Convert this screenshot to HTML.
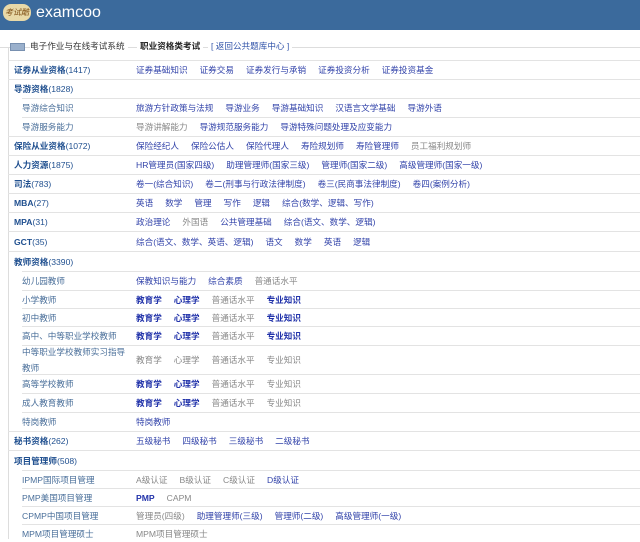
<!DOCTYPE html>
<html><head><meta charset="utf-8"><style>
*{margin:0;padding:0;box-sizing:border-box}
body{width:640px;height:539px;overflow:hidden;background:#fff;font-family:"Liberation Sans","Noto Sans CJK SC",sans-serif;font-size:8.6px;position:relative}
.hd{position:absolute;left:0;top:0;width:640px;height:30px;background:#3b6a9c}
.logo{position:absolute;left:3px;top:4px;width:28px;height:17px;border-radius:8px;background:#e8d9a8;color:#7a4a10;font-size:8px;line-height:17px;text-align:center;font-style:italic}
.brand{position:absolute;left:36px;top:4px;color:#fff;font-size:16px}
.tab{position:absolute;top:40px;color:#333}
.tl{position:absolute;left:0;top:47px;width:640px;height:1px;background:#ddd}
.frame{position:absolute;left:8px;top:48px;width:1px;height:491px;background:#ddd}
.r{position:absolute;left:8px;width:632px;border-top:1px solid #e3e3e3;display:flex;align-items:center}
.l{position:absolute;left:6px;color:#1f4f8f}
.l b{font-weight:bold}
.s{left:14px;color:#4a6f9a}
.c{position:absolute;left:128px;white-space:nowrap}
.c span{margin-right:12px;color:#3344aa}
.c .g{color:#888}
.c .b{font-weight:bold;color:#2233aa}
</style></head><body>
<div class="hd"><div class="logo">考试酷</div><div class="brand">examcoo</div></div>
<div class="tl"></div>
<div style="position:absolute;left:10px;top:43px;width:15px;height:8px;background:#9ab0cc;border:1px solid #7890b0"></div>
<div class="tab" style="left:30px;background:#fff;padding-right:3px">电子作业与在线考试系统</div>
<div class="tab" style="left:137px;font-weight:bold;color:#222;background:#fff;padding:0 3px">职业资格类考试</div>
<div class="tab" style="left:208px;color:#3355aa;background:#fff;padding:0 3px">[ 返回公共题库中心 ]</div>
<div class="frame"></div>

<div class="r" style="top:60px;height:19px"><div class="l"><b>证券从业资格</b>(1417)</div><div class="c"><span>证券基础知识</span><span>证券交易</span><span>证券发行与承销</span><span>证券投资分析</span><span>证券投资基金</span></div></div>
<div class="r" style="top:79px;height:19px"><div class="l"><b>导游资格</b>(1828)</div></div>
<div class="r" style="top:98px;height:19px;left:22px"><div class="l s" style="left:0">导游综合知识</div><div class="c" style="left:114px"><span>旅游方针政策与法规</span><span>导游业务</span><span>导游基础知识</span><span>汉语言文学基础</span><span>导游外语</span></div></div>
<div class="r" style="top:117px;height:19px;left:22px"><div class="l s" style="left:0">导游服务能力</div><div class="c" style="left:114px"><span class="g">导游讲解能力</span><span>导游规范服务能力</span><span>导游特殊问题处理及应变能力</span></div></div>
<div class="r" style="top:136px;height:19px"><div class="l"><b>保险从业资格</b>(1072)</div><div class="c"><span>保险经纪人</span><span>保险公估人</span><span>保险代理人</span><span>寿险规划师</span><span>寿险管理师</span><span class="g">员工福利规划师</span></div></div>
<div class="r" style="top:155px;height:19px"><div class="l"><b>人力资源</b>(1875)</div><div class="c"><span>HR管理员(国家四级)</span><span>助理管理师(国家三级)</span><span>管理师(国家二级)</span><span>高级管理师(国家一级)</span></div></div>
<div class="r" style="top:174px;height:19px"><div class="l"><b>司法</b>(783)</div><div class="c"><span>卷一(综合知识)</span><span>卷二(刑事与行政法律制度)</span><span>卷三(民商事法律制度)</span><span>卷四(案例分析)</span></div></div>
<div class="r" style="top:193px;height:19px"><div class="l"><b>MBA</b>(27)</div><div class="c"><span>英语</span><span>数学</span><span>管理</span><span>写作</span><span>逻辑</span><span>综合(数学、逻辑、写作)</span></div></div>
<div class="r" style="top:212px;height:19px"><div class="l"><b>MPA</b>(31)</div><div class="c"><span>政治理论</span><span class="g">外国语</span><span>公共管理基础</span><span>综合(语文、数学、逻辑)</span></div></div>
<div class="r" style="top:231px;height:20px"><div class="l"><b>GCT</b>(35)</div><div class="c"><span>综合(语文、数学、英语、逻辑)</span><span>语文</span><span>数学</span><span>英语</span><span>逻辑</span></div></div>
<div class="r" style="top:251px;height:20px"><div class="l"><b>教师资格</b>(3390)</div></div>
<div class="r" style="top:271px;height:19px;left:22px"><div class="l s" style="left:0">幼儿园教师</div><div class="c" style="left:114px"><span>保教知识与能力</span><span>综合素质</span><span class="g">普通话水平</span></div></div>
<div class="r" style="top:290px;height:18px;left:22px"><div class="l s" style="left:0">小学教师</div><div class="c" style="left:114px"><span class="b">教育学</span><span class="b">心理学</span><span class="g">普通话水平</span><span class="b">专业知识</span></div></div>
<div class="r" style="top:308px;height:18px;left:22px"><div class="l s" style="left:0">初中教师</div><div class="c" style="left:114px"><span class="b">教育学</span><span class="b">心理学</span><span class="g">普通话水平</span><span class="b">专业知识</span></div></div>
<div class="r" style="top:326px;height:19px;left:22px"><div class="l s" style="left:0">高中、中等职业学校教师</div><div class="c" style="left:114px"><span class="b">教育学</span><span class="b">心理学</span><span class="g">普通话水平</span><span class="b">专业知识</span></div></div>
<div class="r" style="top:345px;height:29px;left:22px"><div class="l s" style="left:0;line-height:16px">中等职业学校教师实习指导<br>教师</div><div class="c" style="left:114px"><span class="g">教育学</span><span class="g">心理学</span><span class="g">普通话水平</span><span class="g">专业知识</span></div></div>
<div class="r" style="top:374px;height:19px;left:22px"><div class="l s" style="left:0">高等学校教师</div><div class="c" style="left:114px"><span class="b">教育学</span><span class="b">心理学</span><span class="g">普通话水平</span><span class="g">专业知识</span></div></div>
<div class="r" style="top:393px;height:19px;left:22px"><div class="l s" style="left:0">成人教育教师</div><div class="c" style="left:114px"><span class="b">教育学</span><span class="b">心理学</span><span class="g">普通话水平</span><span class="g">专业知识</span></div></div>
<div class="r" style="top:412px;height:19px;left:22px"><div class="l s" style="left:0">特岗教师</div><div class="c" style="left:114px"><span>特岗教师</span></div></div>
<div class="r" style="top:431px;height:19px"><div class="l"><b>秘书资格</b>(262)</div><div class="c"><span>五级秘书</span><span>四级秘书</span><span>三级秘书</span><span>二级秘书</span></div></div>
<div class="r" style="top:450px;height:20px"><div class="l"><b>项目管理师</b>(508)</div></div>
<div class="r" style="top:470px;height:18px;left:22px"><div class="l s" style="left:0">IPMP国际项目管理</div><div class="c" style="left:114px"><span class="g">A级认证</span><span class="g">B级认证</span><span class="g">C级认证</span><span>D级认证</span></div></div>
<div class="r" style="top:488px;height:18px;left:22px"><div class="l s" style="left:0">PMP美国项目管理</div><div class="c" style="left:114px"><span class="b">PMP</span><span class="g">CAPM</span></div></div>
<div class="r" style="top:506px;height:18px;left:22px"><div class="l s" style="left:0">CPMP中国项目管理</div><div class="c" style="left:114px"><span class="g">管理员(四级)</span><span>助理管理师(三级)</span><span>管理师(二级)</span><span>高级管理师(一级)</span></div></div>
<div class="r" style="top:524px;height:18px;left:22px"><div class="l s" style="left:0">MPM项目管理硕士</div><div class="c" style="left:114px"><span class="g">MPM项目管理硕士</span></div></div>
</body></html>
